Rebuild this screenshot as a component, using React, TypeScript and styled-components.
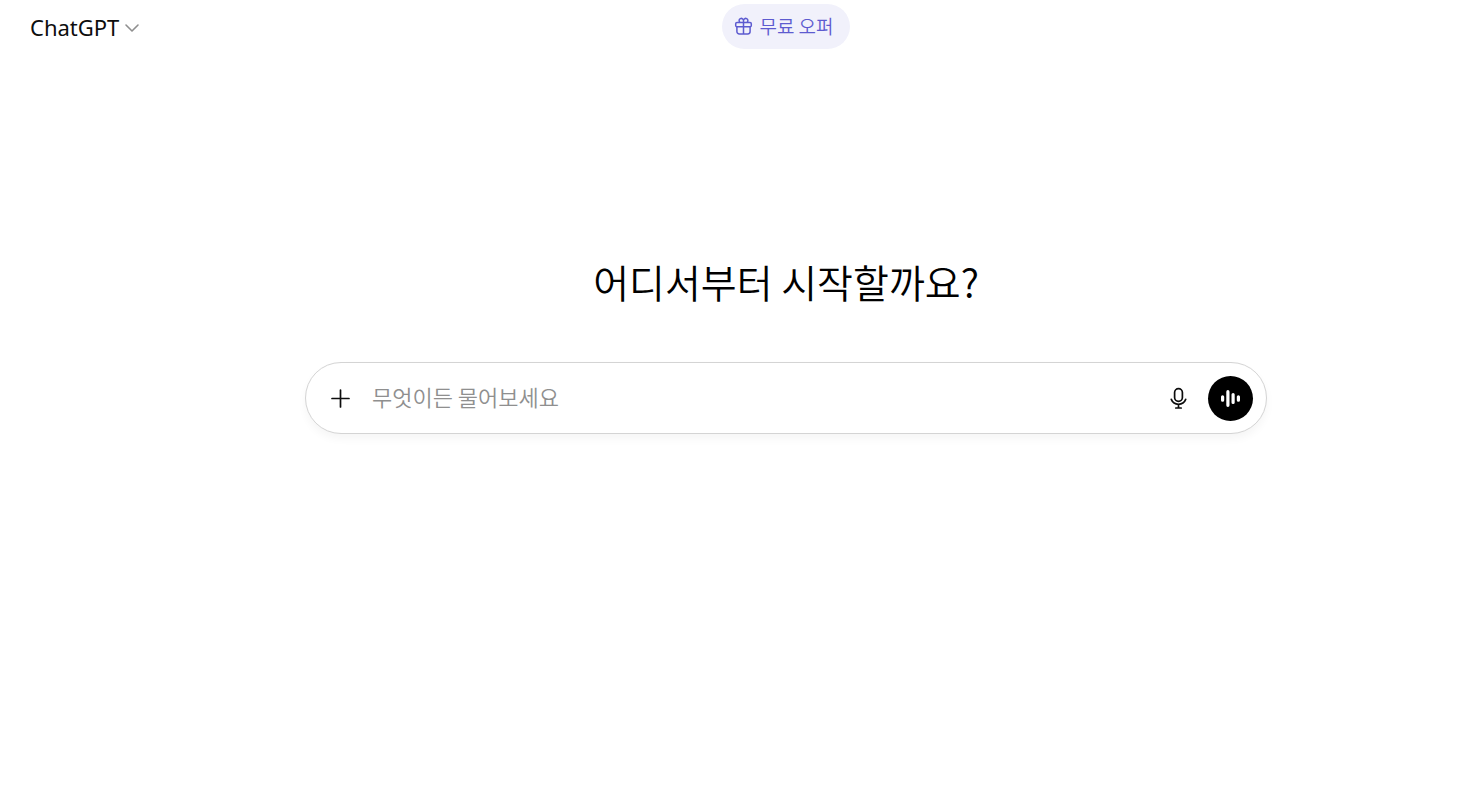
import React from "react";
import styled, { createGlobalStyle } from "styled-components";

const GlobalStyle = createGlobalStyle`
  *, *::before, *::after { box-sizing: border-box; }
  body {
    margin: 0;
    background: #fff;
    color: #0d0d0d;
    font-family: "Noto Sans", "Noto Sans CJK KR", sans-serif;
  }
  button, input { font: inherit; color: inherit; }
  svg { flex: none; }
`;

const Page = styled.div`
  min-height: 100vh;
  display: flex;
  flex-direction: column;
`;

const Header = styled.header`
  display: flex;
  align-items: center;
  height: 53px;
  padding: 0 40px 0 20px;
`;

const ModelButton = styled.button`
  display: flex;
  align-items: center;
  gap: 3px;
  width: 126px;
  height: 45px;
  padding: 0 0 0 10px;
  border: 0;
  border-radius: 10px;
  background: transparent;
  font-size: 22px;
  line-height: 30px;
  cursor: pointer;
`;

const HeaderCenter = styled.div`
  flex: 1;
  display: flex;
  justify-content: center;
`;

const OfferButton = styled.button`
  display: flex;
  align-items: center;
  gap: 6px;
  height: 45px;
  padding: 0 16px 2px 12px;
  border: 0;
  border-radius: 23px;
  background: #f1f1fb;
  color: #5d5bd0;
  font-family: "Noto Sans CJK KR", sans-serif;
  font-size: 19px;
  font-weight: 350;
  line-height: 26px;
  cursor: pointer;
`;

const Main = styled.main`
  display: flex;
  flex-direction: column;
  align-items: center;
  padding: 200px 0 0 106px;
`;

const Title = styled.h1`
  margin: 0 0 52px;
  color: #000;
  font-family: "Noto Sans CJK KR", sans-serif;
  font-size: 39px;
  font-weight: 350;
  line-height: 57px;
`;

const Composer = styled.form`
  display: flex;
  align-items: center;
  width: 100%;
  max-width: 962px;
  height: 72px;
  padding: 0 13px 0 12px;
  border: 1px solid #d4d4d4;
  border-radius: 36px;
  background: #fff;
  box-shadow: 0 5px 8px rgba(0, 0, 0, 0.04);
`;

const IconButton = styled.button<{ $filled?: boolean }>`
  display: flex;
  align-items: center;
  justify-content: center;
  flex: none;
  width: 45px;
  height: 45px;
  padding: 0;
  border: 0;
  border-radius: 50%;
  background: ${(p) => (p.$filled ? "#000" : "transparent")};
  color: ${(p) => (p.$filled ? "#fff" : "#0d0d0d")};
  cursor: pointer;
`;

const Prompt = styled.input`
  flex: 1;
  min-width: 0;
  height: 45px;
  padding: 0 9px 5px;
  border: 0;
  outline: 0;
  background: transparent;
  font-family: "Noto Sans CJK KR", sans-serif;
  font-size: 22px;
  font-weight: 350;
  &::placeholder { color: #8f8f8f; opacity: 1; }
`;

const Actions = styled.div`
  display: flex;
  gap: 7px;
`;

const ChevronIcon = () => (
  <svg width="20" height="20" viewBox="0 0 20 20" fill="none" stroke="#8f8f8f" strokeWidth="1.6" strokeLinecap="round" strokeLinejoin="round" aria-hidden="true">
    <path d="M4 8 10 14l6-6" />
  </svg>
);

const GiftIcon = () => (
  <svg width="19" height="21" viewBox="0 0 19 21" fill="none" stroke="currentColor" strokeWidth="1.5" strokeLinecap="round" strokeLinejoin="round" aria-hidden="true">
    <rect x="1.7" y="7.5" width="15.6" height="4.2" rx="1.3" />
    <path d="M2.900 11.700v4.900a2.400 2.400 0 0 0 2.400 2.400h8.400a2.400 2.400 0 0 0 2.400-2.400V11.700M9.500 7.500v11.500" />
    <path d="M9.500 7.500V5.600a2.200 2.200 0 1 0-3.700 1.600M9.500 7.500V5.600a2.200 2.200 0 1 1 3.700 1.600" />
  </svg>
);

const PlusIcon = () => (
  <svg width="25" height="25" viewBox="0 0 25 25" fill="none" stroke="currentColor" strokeWidth="1.7" strokeLinecap="round" aria-hidden="true">
    <path d="M12.500 4v17M4 12.500h17" />
  </svg>
);

const MicIcon = () => (
  <svg width="25" height="25" viewBox="0 0 25 25" fill="none" stroke="currentColor" strokeWidth="1.7" strokeLinecap="round" aria-hidden="true">
    <rect x="8.600" y="2.700" width="7.800" height="12.600" rx="3.900" />
    <path d="M5.300 13.400c1.200 3 4 4.900 7.200 4.900s6-1.900 7.200-4.900M12.500 18.300v3.500M9.800 22h5.400" />
  </svg>
);

const VoiceIcon = () => (
  <svg width="25" height="25" viewBox="0 0 25 25" fill="none" stroke="currentColor" strokeWidth="3.2" strokeLinecap="round" aria-hidden="true">
    <path d="M4.600 10.800v3.400M9.900 5.700v13.600M15.100 8.600v7.800M20.400 10.800v3.400" />
  </svg>
);

export default function App() {
  return (
    <Page>
      <GlobalStyle />
      <Header>
        <ModelButton type="button">
          ChatGPT
          <ChevronIcon />
        </ModelButton>
        <HeaderCenter>
          <OfferButton type="button">
            <GiftIcon />
            무료 오퍼
          </OfferButton>
        </HeaderCenter>
      </Header>
      <Main>
        <Title>어디서부터 시작할까요?</Title>
        <Composer onSubmit={(e: React.FormEvent) => e.preventDefault()}>
          <IconButton type="button" aria-label="파일 추가">
            <PlusIcon />
          </IconButton>
          <Prompt type="text" aria-label="무엇이든 물어보세요" placeholder="무엇이든 물어보세요" />
          <Actions>
            <IconButton type="button" aria-label="받아쓰기">
              <MicIcon />
            </IconButton>
            <IconButton type="button" $filled aria-label="음성 모드">
              <VoiceIcon />
            </IconButton>
          </Actions>
        </Composer>
      </Main>
    </Page>
  );
}
